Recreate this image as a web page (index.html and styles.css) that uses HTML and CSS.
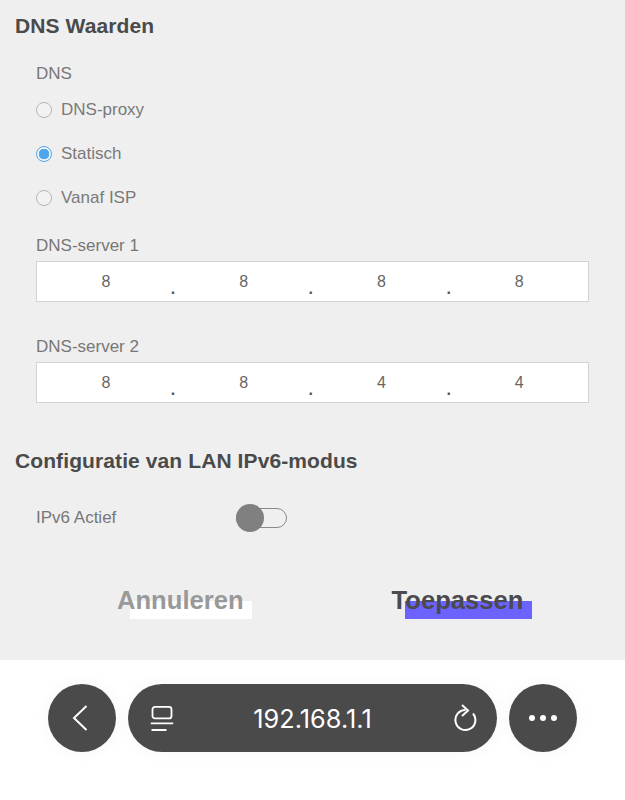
FILE: index.html
```html
<!DOCTYPE html>
<html lang="nl">
<head>
    <meta charset="UTF-8">
    <meta name="viewport" content="width=device-width, initial-scale=1.0">
    <title>DNS Waarden</title>
    <link rel="stylesheet" href="styles.css">
</head>
<body>
    <main class="panel">
        <h2 class="section-title">DNS Waarden</h2>
        <div class="field-group">
            <div class="field-label dns-label">DNS</div>
            <div class="radio-row"><span class="radio"></span>DNS-proxy</div>
            <div class="radio-row"><span class="radio checked"></span>Statisch</div>
            <div class="radio-row"><span class="radio"></span>Vanaf ISP</div>

            <div class="field-label server-label">DNS-server 1</div>
            <div class="ip-box">
                <span class="octet">8</span><span class="dot">.</span>
                <span class="octet">8</span><span class="dot">.</span>
                <span class="octet">8</span><span class="dot">.</span>
                <span class="octet">8</span>
            </div>

            <div class="field-label server-label second">DNS-server 2</div>
            <div class="ip-box">
                <span class="octet">8</span><span class="dot">.</span>
                <span class="octet">8</span><span class="dot">.</span>
                <span class="octet">4</span><span class="dot">.</span>
                <span class="octet">4</span>
            </div>
        </div>

        <h2 class="section-title lan-title">Configuratie van LAN IPv6-modus</h2>
        <div class="field-group toggle-row">
            <span class="field-label">IPv6 Actief</span>
            <span class="toggle"><span class="knob"></span></span>
        </div>

        <div class="actions">
            <button class="action cancel"><span class="smear white"></span><span class="action-text">Annuleren</span></button>
            <button class="action apply"><span class="smear purple"></span><span class="action-text">Toepassen</span></button>
        </div>
    </main>

    <footer class="browser-bar">
        <button class="round-btn" aria-label="Terug">
            <svg class="back-icon" width="16" height="26" viewBox="0 0 16 26"><path d="M14.500 1 2 13l12.500 12" fill="none" stroke="#fff" stroke-width="2"/></svg>
        </button>
        <div class="address">
            <svg class="page-icon" width="24" height="27" viewBox="0 0 24 27" fill="none" stroke="#fff" stroke-width="1.800">
                <rect x="2.500" y="1.900" width="19" height="11.500" rx="2.500"/>
                <path d="M.8 18.300h22.400M1.500 25h15"/>
            </svg>
            <span class="url">192.168.1.1</span>
            <svg class="reload-icon" width="24" height="28" viewBox="0 0 24 28" fill="none" stroke="#fff" stroke-width="2">
                <path d="M12.500 6A10 10 0 1 0 20 9.500"/>
                <path d="M9 1l6 5.500-6 5.500"/>
            </svg>
        </div>
        <button class="round-btn" aria-label="Meer">
            <span class="more-dot"></span><span class="more-dot"></span><span class="more-dot"></span>
        </button>
    </footer>
</body>
</html>
```

FILE: styles.css
```css
body {
    font-family: "Liberation Sans", Arial, sans-serif;
    margin: 0;
    padding: 0;
    background-color: #fff;
    overflow: hidden;
}
.panel {
    height: 660px;
    box-sizing: border-box;
    padding: 14px 0 0 15px;
    background-color: #efefef;
}
.section-title {
    margin: 0;
    font-size: 21px;
    line-height: 24px;
    letter-spacing: 0.1px;
    font-weight: bold;
    color: #4a4a4a;
}
.field-group {
    padding-left: 21px;
}
.field-label {
    font-size: 17px;
    line-height: 20px;
    color: #777;
}
.dns-label {
    margin-top: 26px;
}
.radio-row {
    display: flex;
    align-items: center;
    height: 44px;
    font-size: 17px;
    color: #7a7a7a;
}
.dns-label + .radio-row {
    margin-top: 4px;
}
.radio {
    width: 14px;
    height: 14px;
    margin-right: 9px;
    border: 1px solid #b5b5b5;
    border-radius: 50%;
    background-color: #f2f2f2;
}
.radio.checked {
    border-color: #4da6ee;
    background: radial-gradient(circle, #4da6ee 0 5px, #f2f2f2 5.500px);
}
.server-label {
    margin-top: 16px;
}
.server-label.second {
    margin-top: 35px;
}
.ip-box {
    display: flex;
    align-items: center;
    box-sizing: border-box;
    width: 553px;
    height: 41px;
    margin-top: 5px;
    border: 1px solid #d2d3d6;
    background-color: #fff;
    color: #666;
    font-size: 16px;
}
.octet {
    width: 137.800px;
    flex: none;
    text-align: center;
}
.dot {
    width: 0;
    margin: 14px 4px 0 -4px;
    font-weight: bold;
    color: #555;
}
.lan-title {
    margin-top: 46px;
}
.toggle-row {
    display: flex;
    align-items: center;
    margin-top: 35px;
}
.toggle-row .field-label {
    width: 200px;
}
.toggle {
    position: relative;
    width: 51px;
    height: 20px;
    box-sizing: border-box;
    border: 1px solid #888;
    border-radius: 10px;
}
.knob {
    position: absolute;
    left: -1px;
    top: -5px;
    width: 28px;
    height: 28px;
    border-radius: 50%;
    background-color: #808080;
}
.actions {
    display: flex;
    margin-top: 57px;
    padding-left: 102px;
}
.action {
    position: relative;
    padding: 0;
    border: none;
    background: none;
    font-family: inherit;
    font-size: 25.600px;
    line-height: 30px;
    font-weight: bold;
}
.action-text {
    position: relative;
}
.cancel {
    color: #999;
}
.apply {
    margin-left: 148px;
    color: #4a4a4f;
}
.smear {
    position: absolute;
    top: 16px;
    height: 18px;
}
.smear.white {
    left: 13px;
    width: 122px;
    background-color: #fff;
}
.smear.purple {
    left: 13px;
    width: 127px;
    background-color: #6c63ff;
}
.browser-bar {
    display: flex;
    align-items: center;
    gap: 12px;
    height: 140px;
    box-sizing: border-box;
    padding: 0 0 24px 48px;
    background-color: #fff;
}
.round-btn {
    display: flex;
    align-items: center;
    justify-content: center;
    gap: 5px;
    width: 68px;
    height: 68px;
    padding: 0;
    border: none;
    border-radius: 50%;
    background-color: #4a4a4a;
    box-shadow: 0 0 18px rgba(0, 0, 0, 0.04);
}
.back-icon {
    margin-right: 5px;
}
.more-dot {
    width: 6px;
    height: 6px;
    border-radius: 50%;
    background-color: #fff;
}
.address {
    display: flex;
    align-items: center;
    width: 369px;
    height: 68px;
    box-sizing: border-box;
    padding: 0 20px 0 22px;
    border-radius: 34px;
    background-color: #4a4a4a;
    box-shadow: 0 0 18px rgba(0, 0, 0, 0.04);
    color: #fff;
}
.url {
    flex: 1;
    margin-right: 2px;
    text-align: center;
    font-family: "Inter", "Liberation Sans", sans-serif;
    font-size: 25.300px;
}
```
